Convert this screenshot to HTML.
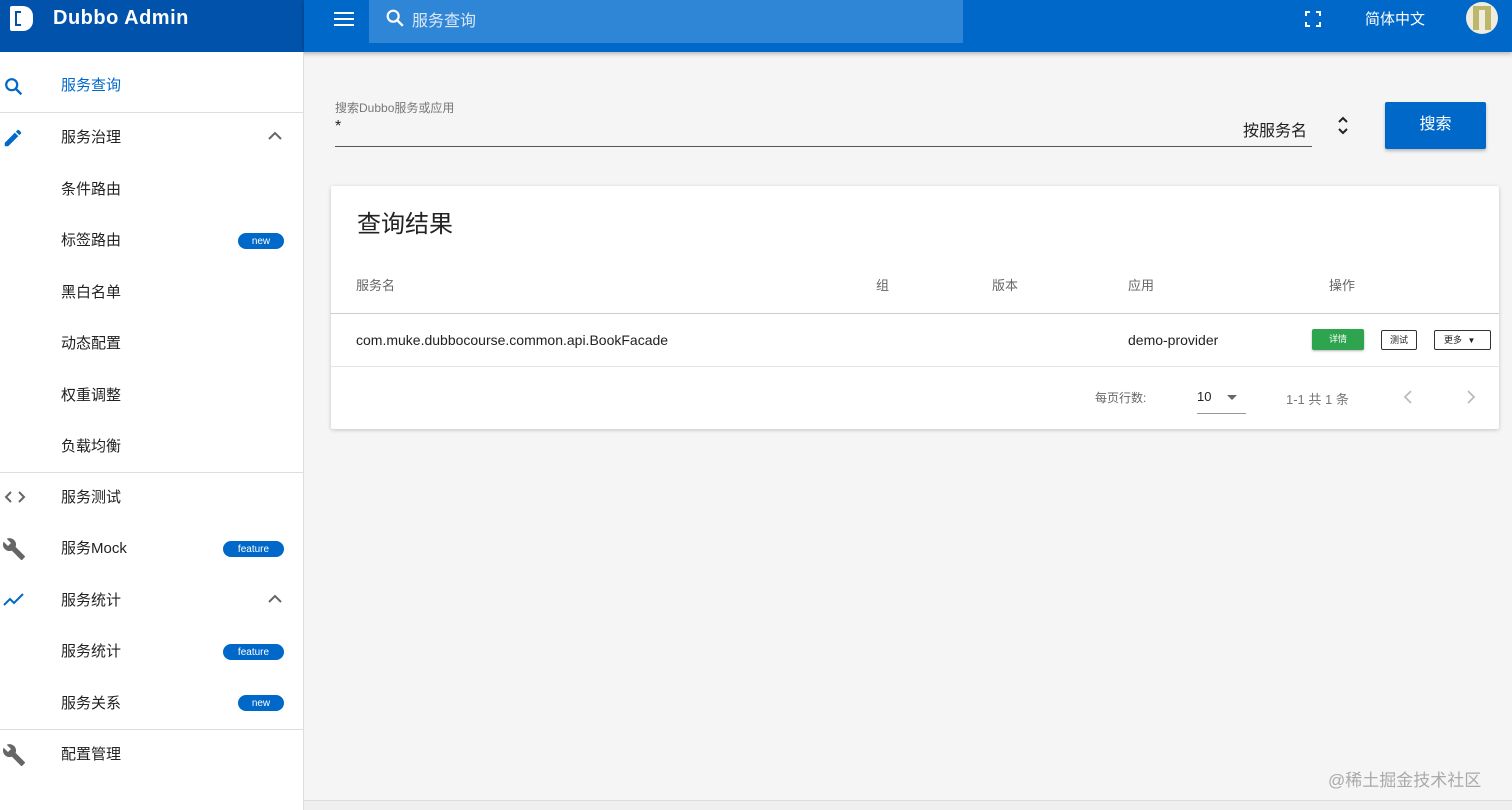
<!DOCTYPE html>
<html><head><meta charset="utf-8"><style>
*{box-sizing:border-box;margin:0;padding:0}
body{width:1512px;height:810px;overflow:hidden;background:#f5f5f5;font-family:"Liberation Sans","Noto Sans CJK SC",sans-serif;color:#222;position:relative}
.abs{position:absolute}
.hdrL{left:0;top:0;width:304px;height:52px;background:#0052aa;box-shadow:0 2px 4px rgba(0,0,0,.25)}
.hdrR{left:304px;top:0;width:1208px;height:52px;background:#0068c9;box-shadow:0 2px 4px rgba(0,0,0,.25)}
.side{left:0;top:52px;width:304px;height:758px;background:#fff;border-right:1px solid #ddd}
.item{position:absolute;left:61px;font-size:15px;color:#222;line-height:20px}
.badge{position:absolute;background:#0068c9;color:#fff;font-size:10px;border-radius:9px;height:16px;line-height:15px;text-align:center;padding-top:1px}
.div{position:absolute;left:0;width:304px;height:1px;background:#ddd}
.th{position:absolute;top:275px;font-size:13px;color:#666}
</style></head><body>
<div class="abs hdrL">
  <div class="abs" style="left:10px;top:6px;width:23px;height:25px;background:#fff;border-radius:2px 10px 10px 2px"></div>
  <div class="abs" style="left:15px;top:11px;width:6px;height:15px;border:2.5px solid #0052aa;border-right:none"></div>
  <div class="abs" style="left:53px;top:7px;color:#fff;font-size:20px;font-weight:bold;letter-spacing:.5px">Dubbo Admin</div>
</div>
<div class="abs hdrR">
  <div class="abs" style="left:30px;top:12px;width:20px;height:2px;background:#fff;box-shadow:0 6px 0 #fff,0 12px 0 #fff"></div>
  <div class="abs" style="left:65px;top:0;width:594px;height:43px;background:#2f86d6"></div>
  <svg class="abs" style="left:80px;top:7px" width="22" height="22" viewBox="0 0 24 24"><circle cx="10" cy="10" r="6" stroke="#fff" stroke-width="2.4" fill="none"/><path d="M14.5 14.5l6 6" stroke="#fff" stroke-width="2.6"/></svg>
  <div class="abs" style="left:108px;top:7px;color:#dce8f6;font-size:16px">服务查询</div>
  <svg class="abs" style="left:1000px;top:10px" width="18" height="18" viewBox="0 0 18 18" fill="none" stroke="#fff" stroke-width="2"><path d="M2 6V2h4M12 2h4v4M16 12v4h-4M6 16H2v-4"/></svg>
  <div class="abs" style="left:1061px;top:8px;color:#fff;font-size:15px">简体中文</div>
  <div class="abs" style="left:1162px;top:2px;width:32px;height:32px;border-radius:50%;background:#f0ede0"></div>
  <div class="abs" style="left:1169px;top:6px;width:18px;height:24px;background:#bcb76a"></div>
  <div class="abs" style="left:1175px;top:10px;width:6px;height:20px;background:#f0ede0"></div>
</div>
<div class="abs side"></div>
<svg class="abs" style="left:3px;top:76px" width="22" height="22" viewBox="0 0 24 24"><circle cx="9.5" cy="9.5" r="6" stroke="#0068c9" stroke-width="2.4" fill="none"/><path d="M14 14l6 6" stroke="#0068c9" stroke-width="2.6"/></svg>
<div class="item" style="top:76px;color:#0068c9">服务查询</div>
<div class="div" style="top:112px"></div>
<svg class="abs" style="left:2px;top:127px" width="22" height="22" viewBox="0 0 24 24"><path d="M3 17.25V21h3.75L17.8 9.94l-3.75-3.75L3 17.25zM20.7 7.04a1 1 0 000-1.41l-2.34-2.34a1 1 0 00-1.41 0l-1.83 1.83 3.75 3.75 1.83-1.83z" fill="#0068c9"/></svg>
<div class="item" style="top:128px">服务治理</div>
<svg class="abs" style="left:266px;top:129px" width="18" height="14" viewBox="0 0 18 14"><path d="M3 10l6-6 6 6" stroke="#666" stroke-width="2" fill="none"/></svg>
<div class="item" style="top:180px">条件路由</div>
<div class="item" style="top:231px">标签路由</div><div class="badge" style="left:238px;top:233px;width:46px">new</div>
<div class="item" style="top:283px">黑白名单</div>
<div class="item" style="top:334px">动态配置</div>
<div class="item" style="top:386px">权重调整</div>
<div class="item" style="top:437px">负载均衡</div>
<div class="div" style="top:472px"></div>
<svg class="abs" style="left:3px;top:488px" width="24" height="18" viewBox="0 0 24 18"><path d="M8 4l-5 5 5 5M16 4l5 5-5 5" stroke="#666" stroke-width="2" fill="none"/></svg>
<div class="item" style="top:488px">服务测试</div>
<svg class="abs" style="left:2px;top:537px" width="24" height="24" viewBox="0 0 24 24"><path d="M22.7 19l-9.1-9.1c.9-2.3.4-5-1.5-6.9-2-2-5-2.4-7.4-1.3L9 6 6 9 1.6 4.7C.4 7.1.9 10.1 2.9 12.1c1.9 1.9 4.6 2.4 6.9 1.5l9.1 9.1c.4.4 1 .4 1.4 0l2.3-2.3c.5-.4.5-1.1.1-1.4z" fill="#666"/></svg>
<div class="item" style="top:539px">服务Mock</div><div class="badge" style="left:223px;top:541px;width:61px">feature</div>
<svg class="abs" style="left:3px;top:591px" width="22" height="18" viewBox="0 0 22 18"><path d="M1 14l6-6 4 4 9-9" stroke="#0068c9" stroke-width="2" fill="none"/></svg>
<div class="item" style="top:591px">服务统计</div>
<svg class="abs" style="left:266px;top:592px" width="18" height="14" viewBox="0 0 18 14"><path d="M3 10l6-6 6 6" stroke="#666" stroke-width="2" fill="none"/></svg>
<div class="item" style="top:642px">服务统计</div><div class="badge" style="left:223px;top:644px;width:61px">feature</div>
<div class="item" style="top:694px">服务关系</div><div class="badge" style="left:238px;top:695px;width:46px">new</div>
<div class="div" style="top:729px"></div>
<svg class="abs" style="left:2px;top:743px" width="24" height="24" viewBox="0 0 24 24"><path d="M22.7 19l-9.1-9.1c.9-2.3.4-5-1.5-6.9-2-2-5-2.4-7.4-1.3L9 6 6 9 1.6 4.7C.4 7.1.9 10.1 2.9 12.1c1.9 1.9 4.6 2.4 6.9 1.5l9.1 9.1c.4.4 1 .4 1.4 0l2.3-2.3c.5-.4.5-1.1.1-1.4z" fill="#666"/></svg>
<div class="item" style="top:745px">配置管理</div>

<div class="abs" style="left:335px;top:99px;font-size:12px;color:#777">搜索Dubbo服务或应用</div>
<div class="abs" style="left:335px;top:118px;font-size:16px">*</div>
<div class="abs" style="left:1243px;top:117px;font-size:16px">按服务名</div>
<div class="abs" style="left:335px;top:146px;width:977px;height:1px;background:#555"></div>
<svg class="abs" style="left:1336px;top:114px" width="14" height="24" viewBox="0 0 14 24"><path d="M3 8l4-4 4 4M3 15l4 4 4-4" stroke="#222" stroke-width="2" fill="none"/></svg>
<div class="abs" style="left:1385px;top:102px;width:101px;height:47px;background:#0068c9;border-radius:2px;box-shadow:0 2px 3px rgba(0,0,0,.25);color:#fff;font-size:16px;text-align:center;line-height:46px">搜索</div>

<div class="abs" style="left:331px;top:186px;width:1168px;height:243px;background:#fff;box-shadow:0 1px 4px rgba(0,0,0,.2);border-radius:2px"></div>
<div class="abs" style="left:357px;top:204px;font-size:24px">查询结果</div>
<div class="th" style="left:356px">服务名</div>
<div class="th" style="left:876px">组</div>
<div class="th" style="left:992px">版本</div>
<div class="th" style="left:1128px">应用</div>
<div class="th" style="left:1329px">操作</div>
<div class="abs" style="left:331px;top:313px;width:1168px;height:1px;background:#ccc"></div>
<div class="abs" style="left:356px;top:332px;font-size:14px">com.muke.dubbocourse.common.api.BookFacade</div>
<div class="abs" style="left:1128px;top:332px;font-size:14px">demo-provider</div>
<div class="abs" style="left:1312px;top:329px;width:52px;height:21px;background:#2ea44f;border-radius:2px;color:#fff;font-size:9px;text-align:center;line-height:21px;box-shadow:0 1px 2px rgba(0,0,0,.3)">详情</div>
<div class="abs" style="left:1381px;top:330px;width:36px;height:20px;border:1px solid #333;border-radius:2px;font-size:9px;text-align:center;line-height:18px">测试</div>
<div class="abs" style="left:1434px;top:330px;width:57px;height:20px;border:1px solid #333;border-radius:2px;font-size:9px;line-height:18px;padding-left:9px">更多 <span style="font-size:8px;margin-left:3px">▼</span></div>
<div class="abs" style="left:331px;top:366px;width:1168px;height:1px;background:#e4e4e4"></div>
<div class="abs" style="left:1095px;top:389px;font-size:12px;color:#666">每页行数:</div>
<div class="abs" style="left:1197px;top:389px;font-size:13px">10</div>
<svg class="abs" style="left:1226px;top:393px" width="12" height="8"><path d="M1 2h10L6 7z" fill="#666"/></svg>
<div class="abs" style="left:1197px;top:413px;width:49px;height:1px;background:#999"></div>
<div class="abs" style="left:1286px;top:389px;font-size:13px;color:#777">1-1 共 1 条</div>
<svg class="abs" style="left:1402px;top:389px" width="12" height="16"><path d="M9 2L3 8l6 6" stroke="#bbb" stroke-width="1.8" fill="none"/></svg>
<svg class="abs" style="left:1465px;top:389px" width="12" height="16"><path d="M3 2l6 6-6 6" stroke="#bbb" stroke-width="1.8" fill="none"/></svg>
<div class="abs" style="left:1328px;top:766px;font-size:17px;color:#aaa">@稀土掘金技术社区</div>
<div class="abs" style="left:304px;top:800px;width:1208px;height:10px;background:#efefef;border-top:1px solid #ddd"></div>
</body></html>
